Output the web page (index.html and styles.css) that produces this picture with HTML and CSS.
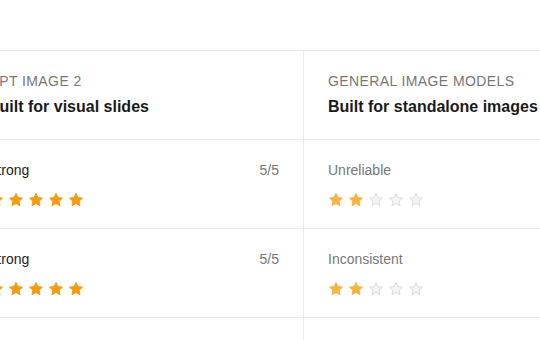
FILE: index.html
```html
<!DOCTYPE html>
<html>
  <head>
    <title>Comparação</title>
    <meta charset="utf-8" />
    <link rel="stylesheet" href="styles.css">
  </head>
  <body>
    <div class="topo"></div>

    <div class="tabela">
      <div class="celula cabecalho">
        <p class="rotulo">GPT Image 2</p>
        <p class="titulo">Built for visual slides</p>
      </div>
      <div class="celula cabecalho">
        <p class="rotulo">General image models</p>
        <p class="titulo">Built for standalone images</p>
      </div>

      <div class="celula">
        <div class="linha">
          <span class="nome">Strong</span>
          <span class="nota">5/5</span>
        </div>
        <div class="estrelas" data-nota="5"></div>
      </div>
      <div class="celula">
        <div class="linha">
          <span class="nome fraco">Unreliable</span>
        </div>
        <div class="estrelas fraca" data-nota="2"></div>
      </div>

      <div class="celula">
        <div class="linha">
          <span class="nome">Strong</span>
          <span class="nota">5/5</span>
        </div>
        <div class="estrelas" data-nota="5"></div>
      </div>
      <div class="celula">
        <div class="linha">
          <span class="nome fraco">Inconsistent</span>
        </div>
        <div class="estrelas fraca" data-nota="2"></div>
      </div>

      <div class="celula vazia"></div>
      <div class="celula vazia"></div>
    </div>

    <script>
      var estrela = '<svg width="16" height="16" viewBox="0 0 24 24"><path d="M12 2.2l2.9 6.2 6.8.8-5 4.6 1.3 6.7L12 17.2l-6 3.3 1.3-6.7-5-4.6 6.8-.8z"/></svg>';

      var grupos = document.querySelectorAll('.estrelas');
      for (var i = 0; i < grupos.length; i++) {
        var nota = Number(grupos[i].getAttribute('data-nota'));
        var html = '';
        for (var j = 0; j < 5; j++) {
          html += '<span class="estrela ' + (j < nota ? 'cheia' : 'vazia') + '">' + estrela + '</span>';
        }
        grupos[i].innerHTML = html;
      }
    </script>
  </body>
</html>
```

FILE: styles.css
```css
body {
    margin: 0;
    background-color: #fff;
    font-family: "Liberation Sans", Arial, sans-serif;
    overflow: hidden;
}

p {
    margin: 0;
}

.topo {
    height: 50px;
}

.tabela {
    display: grid;
    grid-template-columns: 340px 338px;
    margin-left: -36px;
    border-top: 1px solid #ebebeb;
}

.celula {
    padding: 20px 24px;
    height: 48px;
    border-bottom: 1px solid #ebebeb;
    display: flex;
    flex-direction: column;
    gap: 12px;
}

.celula:nth-child(odd) {
    border-right: 1px solid #ebebeb;
}

.cabecalho {
    gap: 5px;
}

.rotulo {
    font-size: 14px;
    line-height: 20px;
    color: #777;
    text-transform: uppercase;
    letter-spacing: 0.4px;
}

.titulo {
    font-size: 16px;
    line-height: 22px;
    font-weight: bold;
    color: #1a1a1a;
}

.linha {
    display: flex;
    justify-content: space-between;
    font-size: 14px;
    line-height: 20px;
}

.nome {
    color: #222;
}

.nome.fraco {
    color: #777;
}

.nota {
    color: #777;
}

.estrelas {
    display: flex;
    gap: 4px;
    height: 16px;
}

.estrela svg {
    display: block;
    stroke-linejoin: round;
    stroke-width: 1.5;
}

.estrela.cheia svg {
    fill: #f39c12;
    stroke: #f39c12;
}

.fraca .estrela.cheia svg {
    fill: #f6b446;
    stroke: #f6b446;
}

.estrela.vazia svg {
    fill: #f4f4f4;
    stroke: #dcdcdc;
}
```
